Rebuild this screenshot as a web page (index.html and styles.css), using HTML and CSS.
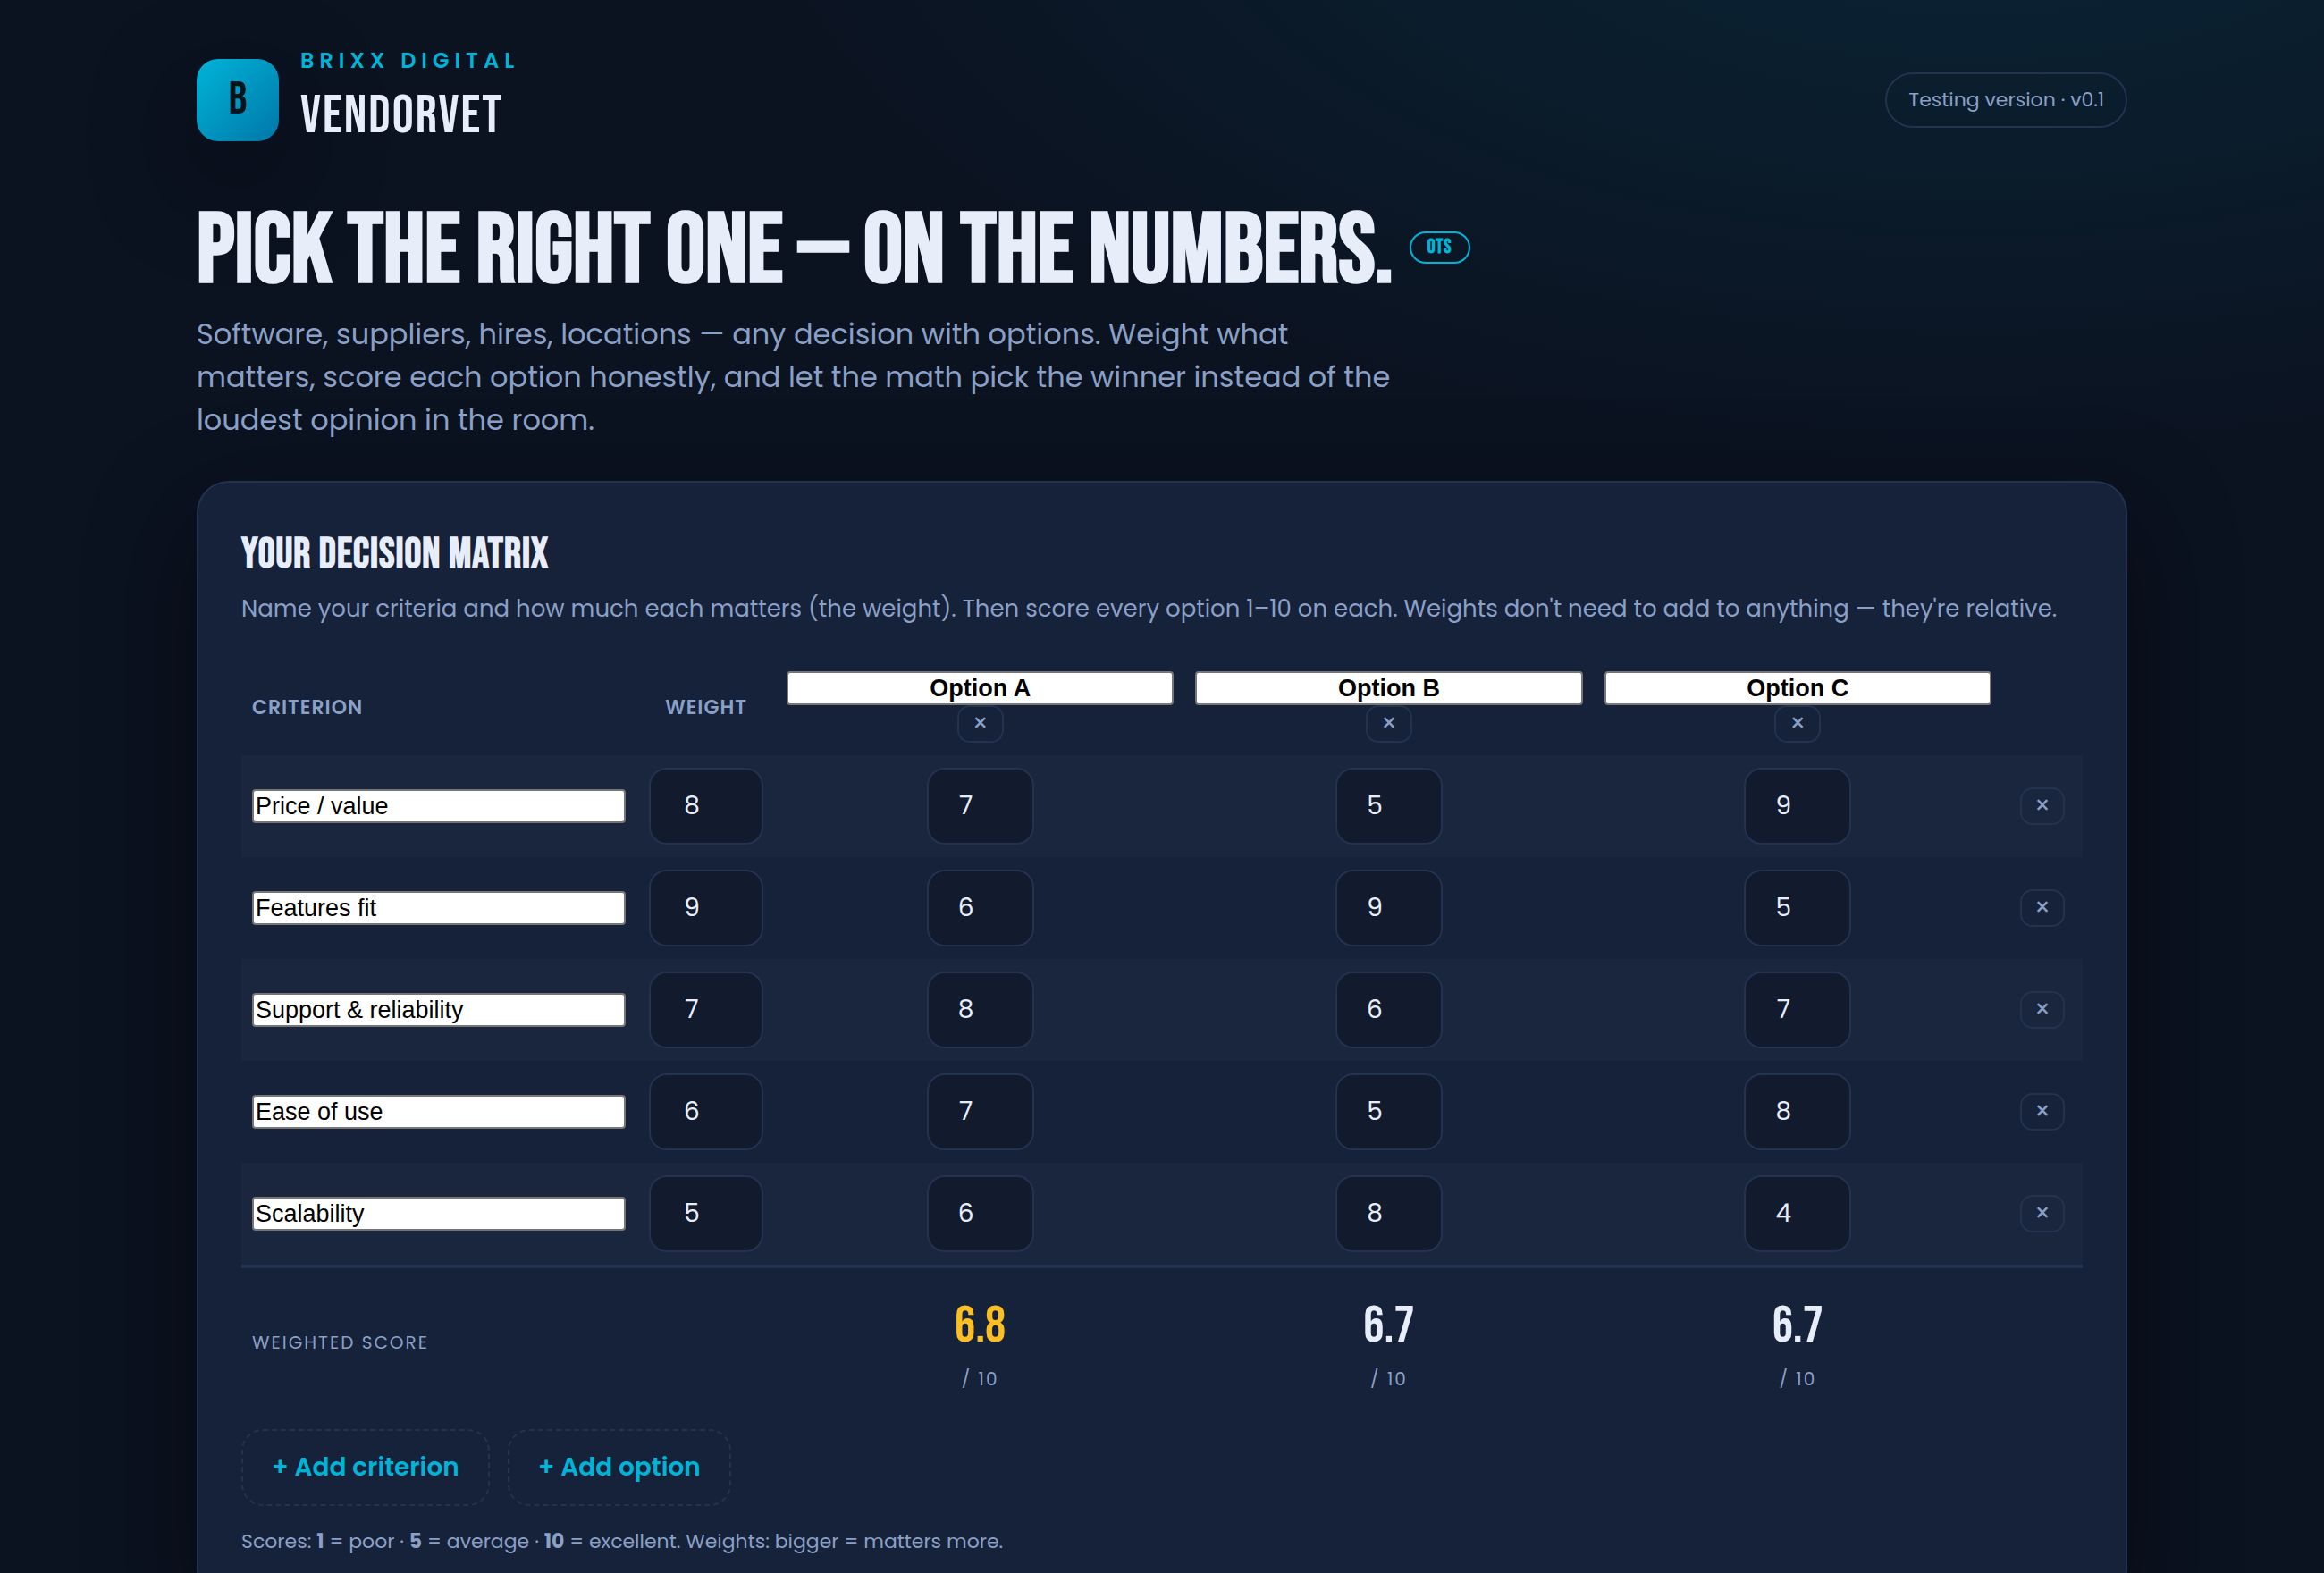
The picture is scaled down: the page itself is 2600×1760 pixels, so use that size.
FILE: index.html
```html
<!DOCTYPE html>
<html lang="en">
<head>
    <meta charset="UTF-8">
    <meta name="viewport" content="width=device-width, initial-scale=1.0">
    <title>VendorVet | Brixx Digital</title>
    <link rel="stylesheet" href="styles.css">
</head>
<body>
    <div class="wrap">
        <header class="topbar">
            <div class="brand">
                <div class="logo">B</div>
                <div>
                    <div class="brand-name">Brixx Digital</div>
                    <div class="product">VENDORVET</div>
                </div>
            </div>
            <span class="version">Testing version · v0.1</span>
        </header>

        <!-- Intro -->
        <section class="intro">
            <h1>PICK THE RIGHT ONE — ON THE NUMBERS. <span class="tag">OTS</span></h1>
            <p>Software, suppliers, hires, locations — any decision with options. Weight what matters, score each option honestly, and let the math pick the winner instead of the loudest opinion in the room.</p>
        </section>

        <!-- Decision matrix -->
        <main class="card">
            <h2>YOUR DECISION MATRIX</h2>
            <p class="lead">Name your criteria and how much each matters (the weight). Then score every option 1–10 on each. Weights don't need to add to anything — they're relative.</p>

            <table class="matrix">
                <colgroup>
                    <col class="col-name">
                    <col class="col-weight">
                    <col>
                    <col>
                    <col>
                    <col class="col-remove">
                </colgroup>
                <thead>
                    <tr>
                        <th class="left">Criterion</th>
                        <th>Weight</th>
                        <th><input type="text" class="option-name" aria-label="Option 1 name" value="Option A"><button class="remove" aria-label="Remove Option A">×</button></th>
                        <th><input type="text" class="option-name" aria-label="Option 2 name" value="Option B"><button class="remove" aria-label="Remove Option B">×</button></th>
                        <th><input type="text" class="option-name" aria-label="Option 3 name" value="Option C"><button class="remove" aria-label="Remove Option C">×</button></th>
                        <th></th>
                    </tr>
                </thead>
                <tbody>
                    <tr>
                        <td><input type="text" class="criterion" aria-label="Criterion 1" value="Price / value"></td>
                        <td><input type="number" class="num weight" aria-label="Price weight" min="1" max="10" value="8"></td>
                        <td><input type="number" class="num" aria-label="Price, Option A" min="1" max="10" value="7"></td>
                        <td><input type="number" class="num" aria-label="Price, Option B" min="1" max="10" value="5"></td>
                        <td><input type="number" class="num" aria-label="Price, Option C" min="1" max="10" value="9"></td>
                        <td><button class="remove" aria-label="Remove Price / value">×</button></td>
                    </tr>
                    <tr>
                        <td><input type="text" class="criterion" aria-label="Criterion 2" value="Features fit"></td>
                        <td><input type="number" class="num weight" aria-label="Features weight" min="1" max="10" value="9"></td>
                        <td><input type="number" class="num" aria-label="Features, Option A" min="1" max="10" value="6"></td>
                        <td><input type="number" class="num" aria-label="Features, Option B" min="1" max="10" value="9"></td>
                        <td><input type="number" class="num" aria-label="Features, Option C" min="1" max="10" value="5"></td>
                        <td><button class="remove" aria-label="Remove Features fit">×</button></td>
                    </tr>
                    <tr>
                        <td><input type="text" class="criterion" aria-label="Criterion 3" value="Support &amp; reliability"></td>
                        <td><input type="number" class="num weight" aria-label="Support weight" min="1" max="10" value="7"></td>
                        <td><input type="number" class="num" aria-label="Support, Option A" min="1" max="10" value="8"></td>
                        <td><input type="number" class="num" aria-label="Support, Option B" min="1" max="10" value="6"></td>
                        <td><input type="number" class="num" aria-label="Support, Option C" min="1" max="10" value="7"></td>
                        <td><button class="remove" aria-label="Remove Support &amp; reliability">×</button></td>
                    </tr>
                    <tr>
                        <td><input type="text" class="criterion" aria-label="Criterion 4" value="Ease of use"></td>
                        <td><input type="number" class="num weight" aria-label="Ease of use weight" min="1" max="10" value="6"></td>
                        <td><input type="number" class="num" aria-label="Ease of use, Option A" min="1" max="10" value="7"></td>
                        <td><input type="number" class="num" aria-label="Ease of use, Option B" min="1" max="10" value="5"></td>
                        <td><input type="number" class="num" aria-label="Ease of use, Option C" min="1" max="10" value="8"></td>
                        <td><button class="remove" aria-label="Remove Ease of use">×</button></td>
                    </tr>
                    <tr>
                        <td><input type="text" class="criterion" aria-label="Criterion 5" value="Scalability"></td>
                        <td><input type="number" class="num weight" aria-label="Scalability weight" min="1" max="10" value="5"></td>
                        <td><input type="number" class="num" aria-label="Scalability, Option A" min="1" max="10" value="6"></td>
                        <td><input type="number" class="num" aria-label="Scalability, Option B" min="1" max="10" value="8"></td>
                        <td><input type="number" class="num" aria-label="Scalability, Option C" min="1" max="10" value="4"></td>
                        <td><button class="remove" aria-label="Remove Scalability">×</button></td>
                    </tr>
                </tbody>
                <tfoot>
                    <tr>
                        <td class="left">Weighted score</td>
                        <td></td>
                        <td><div class="score best">6.8</div><div>/ 10</div></td>
                        <td><div class="score">6.7</div><div>/ 10</div></td>
                        <td><div class="score">6.7</div><div>/ 10</div></td>
                        <td></td>
                    </tr>
                </tfoot>
            </table>

            <div class="actions">
                <button class="add">+ Add criterion</button>
                <button class="add">+ Add option</button>
            </div>
            <p class="hint">Scores: <b>1</b> = poor · <b>5</b> = average · <b>10</b> = excellent. Weights: bigger = matters more.</p>
        </main>
    </div>
</body>
</html>
```
FILE: styles.css
```css
:root {
    --bg: #0b1220;
    --card: #16213a;
    --line: #22324f;
    --text: #e8eef9;
    --muted: #8aa0c6;
    --accent: #00b4d8;
    --gold: #fbbf24;
    --shadow: 0 40px 120px rgba(0, 0, 0, 0.45);
    --body-font: Poppins, Inter, sans-serif;
    --display-font: "Bebas Neue", "Liberation Sans Narrow", sans-serif;
}

* {
    margin: 0;
    padding: 0;
    box-sizing: border-box;
}

body {
    background: radial-gradient(2400px 1200px at 85% -10%, rgba(0, 180, 216, 0.12), transparent 60%) no-repeat, var(--bg);
    color: var(--text);
    font-family: var(--body-font);
    font-size: 28px;
    min-height: 100vh;
}

.wrap {
    max-width: 2240px;
    margin: 0 auto;
    padding: 50px 40px;
}

/* Header */
.topbar, .brand {
    display: flex;
    align-items: center;
}

.topbar {
    justify-content: space-between;
}

.brand {
    gap: 24px;
}

.logo {
    width: 92px;
    height: 92px;
    border-radius: 24px;
    background: linear-gradient(135deg, #00b4d8, #0077a8);
    box-shadow: var(--shadow);
    color: #04141c;
    display: flex;
    align-items: center;
    justify-content: center;
    font: 52px/1 var(--display-font);
}

.brand-name {
    color: var(--accent);
    font-size: 24px;
    font-weight: 600;
    line-height: 36px;
    letter-spacing: 6px;
    text-transform: uppercase;
}

.product {
    font: 60px/88px var(--display-font);
    letter-spacing: 2px;
}

.version {
    border: 2px solid var(--line);
    border-radius: 32px;
    color: var(--muted);
    font-size: 22px;
    line-height: 34px;
    padding: 12px 24px;
}

/* Intro */
.intro {
    margin: 52px 0 44px;
}

h1 {
    font: bold 110px/112px var(--display-font);
    margin-bottom: 12px;
}

.tag {
    display: inline-block;
    vertical-align: middle;
    border: 2px solid var(--accent);
    border-radius: 20px;
    color: var(--accent);
    font-size: 22px;
    line-height: 32px;
    letter-spacing: 1px;
    padding: 0 18px;
}

.intro p {
    max-width: 1360px;
    color: var(--muted);
    font-size: 32px;
    line-height: 48px;
}

/* Card */
.card {
    background: var(--card);
    border: 2px solid var(--line);
    border-radius: 36px;
    box-shadow: var(--shadow);
    padding: 48px;
}

h2 {
    font: bold 47px/66px var(--display-font);
    letter-spacing: 1px;
}

.lead {
    color: var(--muted);
    font-size: 26px;
    line-height: 44px;
    margin: 5px 0 34px;
}

.matrix {
    width: 100%;
    border-collapse: collapse;
    table-layout: fixed;
}

.col-name { width: 442px; }
.col-weight { width: 156px; }
.col-remove { width: 90px; }

.matrix th, .matrix td {
    text-align: center;
    vertical-align: middle;
    padding: 14px 12px;
}

.matrix th {
    color: var(--muted);
    font-size: 22px;
    font-weight: 600;
    letter-spacing: 1px;
    text-transform: uppercase;
}

.matrix .left {
    text-align: left;
}

.matrix tbody tr:nth-child(odd) {
    background: #1a263e;
}

.option-name, .criterion {
    display: block;
    width: 100%;
    height: 38px;
    background: #fff;
    border: 2px solid #767676;
    border-radius: 4px;
    color: #000;
    font: 27px/32px "Liberation Sans", Arial, sans-serif;
    padding: 0 2px;
}

.option-name {
    font-weight: bold;
    text-align: center;
}

.num {
    display: block;
    width: 120px;
    height: 86px;
    margin: 0 auto;
    background: #121a2d;
    border: 2px solid var(--line);
    border-radius: 20px;
    color: var(--text);
    font: 28px/40px var(--body-font);
    text-align: center;
    padding-right: 32px;
    appearance: textfield;
}

.num::-webkit-inner-spin-button {
    appearance: none;
}

.weight {
    width: 128px;
}

.remove {
    width: 50px;
    height: 42px;
    background: none;
    border: 2px solid var(--line);
    border-radius: 14px;
    color: var(--muted);
    font: 28px/32px var(--body-font);
    cursor: pointer;
}

.option-name + .remove {
    display: block;
    width: 52px;
    margin: 0 auto;
}

.matrix tfoot {
    border-top: 4px solid var(--line);
}

.matrix tfoot td {
    color: var(--muted);
    font-size: 20px;
    line-height: 36px;
    letter-spacing: 2px;
    text-transform: uppercase;
    padding: 24px 12px 22px;
}

.matrix .score {
    color: var(--text);
    font: 58px/82px var(--display-font);
    letter-spacing: 0;
}

.matrix .best {
    color: var(--gold);
}

.actions {
    display: flex;
    gap: 20px;
    margin-top: 16px;
}

.add {
    background: none;
    border: 2px dashed var(--line);
    border-radius: 24px;
    color: var(--accent);
    font: 600 28px/42px var(--body-font);
    padding: 20px 32px;
    cursor: pointer;
}

.hint {
    color: var(--muted);
    font-size: 22px;
    line-height: 36px;
    margin-top: 22px;
}
```
